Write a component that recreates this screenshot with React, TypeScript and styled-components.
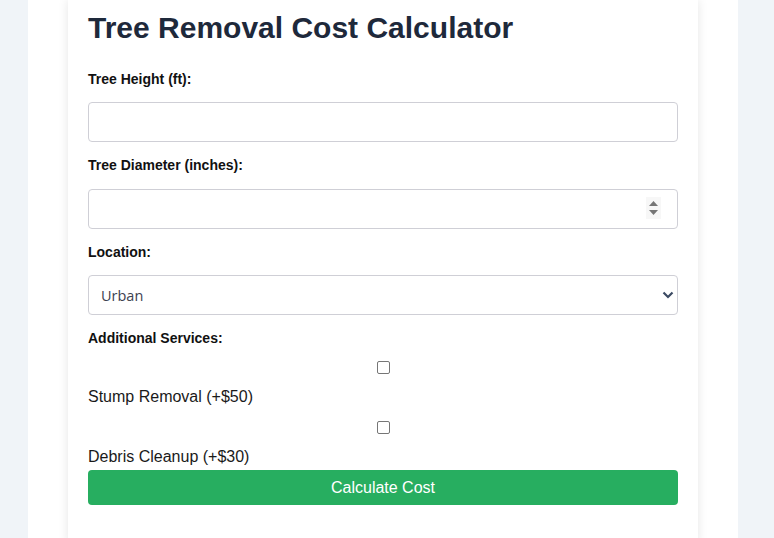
import React, { useState } from "react";
import styled, { createGlobalStyle } from "styled-components";

const GlobalStyle = createGlobalStyle`
  html, body {
    margin: 0;
    padding: 0;
    background: #f0f4f8;
    font-family: "Liberation Sans", Arial, sans-serif;
  }
`;

const Page = styled.div`
  width: 630px;
  margin-left: 28px;
  padding: 0 40px;
  background: #ffffff;
  min-height: 538px;
`;

const Card = styled.div`
  background: #ffffff;
  padding: 10px 20px 40px;
  box-shadow: 0 0 10px rgba(0, 0, 0, 0.1);
  min-height: 538px;
  box-sizing: border-box;
`;

const Title = styled.h1`
  margin: 0 0 25px;
  font-size: 30px;
  line-height: 36px;
  font-weight: 700;
  color: #1e293b;
`;

const Label = styled.label<{ $gap?: number }>`
  display: block;
  font-size: 14px;
  line-height: 16px;
  font-weight: 700;
  color: #111111;
  margin-bottom: ${(p) => (p.$gap ?? 15)}px;
`;

const Field = styled.div`
  position: relative;
  margin-bottom: 15px;
`;

const Input = styled.input`
  display: block;
  width: 100%;
  height: 40px;
  box-sizing: border-box;
  padding: 10px;
  border: 1px solid #cfcfd6;
  border-radius: 4px;
  font-family: "Liberation Sans", Arial, sans-serif;
  font-size: 16px;
  outline: none;
  -moz-appearance: textfield;

  &::-webkit-inner-spin-button,
  &::-webkit-outer-spin-button {
    -webkit-appearance: none;
    margin: 0;
  }
`;

const Spinner = styled.div`
  position: absolute;
  right: 17px;
  top: 8px;
  width: 15px;
  height: 22px;
  background: #f7f7f7;
  display: flex;
  align-items: center;
  justify-content: center;
  pointer-events: none;
`;

const Select = styled.select`
  display: block;
  width: 100%;
  height: 40px;
  box-sizing: border-box;
  padding: 0 30px 0 12px;
  border: 1px solid #cfcfd6;
  border-radius: 4px;
  background: #ffffff;
  font-family: "Open Sans", sans-serif;
  font-size: 14.5px;
  color: #3d4250;
  appearance: none;
  outline: none;
`;

const Chevron = styled.svg`
  position: absolute;
  right: 4px;
  top: 16px;
  pointer-events: none;
`;

const CheckItem = styled.div<{ $top: number }>`
  display: flex;
  flex-direction: column;
  margin-top: ${(p) => p.$top}px;
`;

const Checkbox = styled.input`
  appearance: none;
  align-self: center;
  width: 13px;
  height: 13px;
  margin: 0 0 14px;
  border: 1px solid #767676;
  border-radius: 2px;
  background: #ffffff;
  box-sizing: border-box;

  &:checked {
    background: #0075ff;
    border-color: #0075ff;
  }
`;

const CheckText = styled.span`
  font-size: 16px;
  line-height: 18px;
  color: #1a1a1a;
`;

const Button = styled.button`
  display: block;
  width: 100%;
  height: 35px;
  margin-top: 4px;
  border: none;
  border-radius: 4px;
  background: #27ae60;
  color: #ffffff;
  font-family: "Liberation Sans", Arial, sans-serif;
  font-size: 16px;
  cursor: pointer;
`;

export default function App() {
  const [height, setHeight] = useState("");
  const [diameter, setDiameter] = useState("");
  const [location, setLocation] = useState("urban");
  const [stump, setStump] = useState(false);
  const [debris, setDebris] = useState(false);

  return (
    <>
      <GlobalStyle />
      <Page>
        <Card>
          <Title>Tree Removal Cost Calculator</Title>

          <Label htmlFor="height">Tree Height (ft):</Label>
          <Field>
            <Input
              id="height"
              type="number"
              value={height}
              onChange={(e) => setHeight(e.target.value)}
            />
          </Field>

          <Label htmlFor="diameter" $gap={16}>
            Tree Diameter (inches):
          </Label>
          <Field>
            <Input
              id="diameter"
              type="number"
              value={diameter}
              onChange={(e) => setDiameter(e.target.value)}
            />
            <Spinner>
              <svg width="11" height="18" viewBox="0 0 11 18">
                <path d="M5.5 2 L10 7 L1 7 Z" fill="#767676" />
                <path d="M1 11 L10 11 L5.5 16 Z" fill="#767676" />
              </svg>
            </Spinner>
          </Field>

          <Label htmlFor="location">Location:</Label>
          <Field>
            <Select
              id="location"
              value={location}
              onChange={(e) => setLocation(e.target.value)}
            >
              <option value="urban">Urban</option>
              <option value="suburban">Suburban</option>
              <option value="rural">Rural</option>
            </Select>
            <Chevron width="12" height="8" viewBox="0 0 12 8">
              <path
                d="M1.5 1.5 L6 6 L10.5 1.5"
                fill="none"
                stroke="#3b4a63"
                strokeWidth="2.2"
              />
            </Chevron>
          </Field>

          <Label as="div" $gap={0}>
            Additional Services:
          </Label>
          <CheckItem $top={15}>
            <Checkbox
              type="checkbox"
              id="stump"
              checked={stump}
              onChange={(e) => setStump(e.target.checked)}
            />
            <CheckText>Stump Removal (+$50)</CheckText>
          </CheckItem>
          <CheckItem $top={15}>
            <Checkbox
              type="checkbox"
              id="debris"
              checked={debris}
              onChange={(e) => setDebris(e.target.checked)}
            />
            <CheckText>Debris Cleanup (+$30)</CheckText>
          </CheckItem>

          <Button type="button">Calculate Cost</Button>
        </Card>
      </Page>
    </>
  );
}
